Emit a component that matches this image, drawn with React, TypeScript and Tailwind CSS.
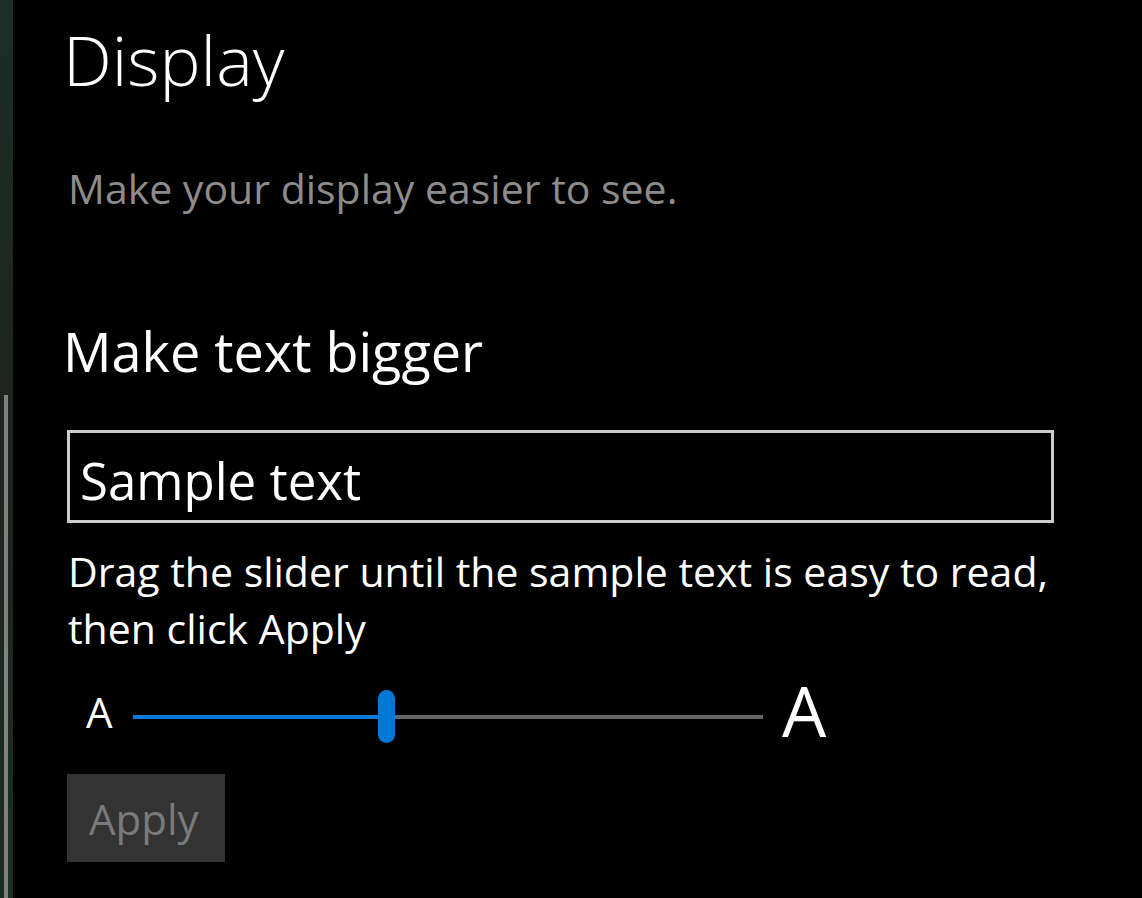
import React from "react";

function Slider() {
  return (
    <div className="flex items-center h-[60px] mt-[30px]">
      <span className="w-[70px] pl-[23px] pb-[10px] text-[42px] leading-none text-white">A</span>
      <div className="relative flex items-center w-[630px] h-[60px]">
        <div className="h-[4px] w-[252px] bg-[#0078d7]" />
        <div className="h-[4px] flex-1 bg-[#666666]" />
        <div className="absolute left-[245px] top-[3px] h-[53px] w-[17px] rounded-full bg-[#0078d7]" />
      </div>
      <span className="ml-[19px] pb-[14px] text-[70px] leading-none text-white">A</span>
    </div>
  );
}

export default function App() {
  return (
    <div
      className="flex w-[1142px] h-[898px] bg-black overflow-hidden"
      style={{ fontFamily: '"Open Sans", "Noto Sans", sans-serif' }}
    >
      <div className="flex flex-col w-[13px] shrink-0 bg-gradient-to-b from-[#1b2e27] via-[#1e241f] to-[#1b2e24] pt-[395px]">
        <div className="ml-[4px] w-[4px] flex-1 bg-[#808080]" />
      </div>
      <div className="flex flex-col pl-[50px]">
        <h1 className="mt-[19px] text-[69px] font-light leading-[80px] text-white">Display</h1>
        <p className="mt-[65px] pl-[5px] text-[41px] leading-[48px] text-[#8c8c8c]">
          Make your display easier to see.
        </p>
        <h2 className="mt-[104px] text-[54px] leading-[70px] text-white">Make text bigger</h2>
        <div className="mt-[44px] ml-[4px] flex items-center w-[987px] h-[93px] border-[3px] border-[#cccccc] pl-[10px] pt-[8px]">
          <span className="text-[51px] leading-none text-white">Sample text</span>
        </div>
        <p className="mt-[20px] pl-[5px] w-[1040px] text-[41px] leading-[57px] text-white">
          Drag the slider until the sample text is easy to read,
          <br />
          then click Apply
        </p>
        <Slider />
        <button className="mt-[27px] ml-[4px] w-[158px] h-[88px] bg-[#333333] text-[42px] text-[#7a7a7a] text-left pl-[22px]">
          Apply
        </button>
      </div>
    </div>
  );
}
